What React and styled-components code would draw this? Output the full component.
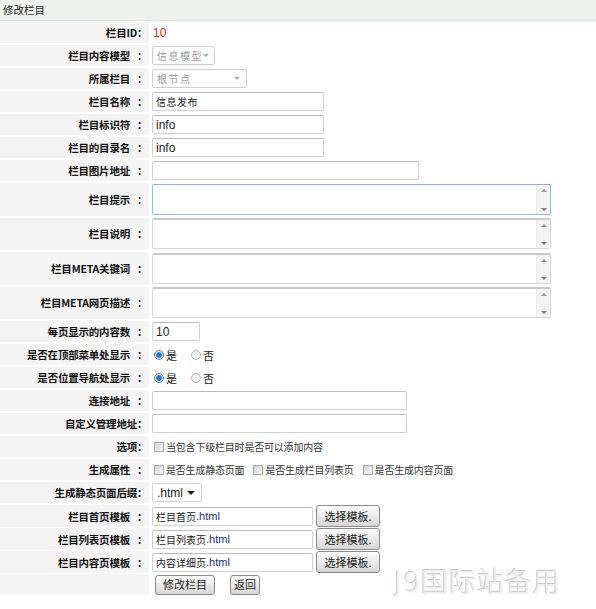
import React from 'react';
import styled, { createGlobalStyle } from 'styled-components';

const GlobalStyle = createGlobalStyle`
  html, body {
    margin: 0;
    padding: 0;
    background: #fff;
  }
  body {
    font-family: "Liberation Sans", "Noto Sans CJK SC", sans-serif;
    font-size: 11px;
    color: #333;
  }
`;

const Page = styled.div`
  position: relative;
  width: 596px;
  height: 609px;
  overflow: hidden;
`;

const Header = styled.div`
  height: 20px;
  line-height: 20px;
  padding-left: 3px;
  background: #eef2ef;
  border-bottom: 1px solid #dde3df;
  color: #222;
  font-family: "Noto Sans CJK SC", sans-serif;
  font-size: 10.5px;
`;

const Form = styled.div`
  display: flex;
  flex-direction: column;
  gap: 2px;
  padding-top: 1px;
`;

const Row = styled.div`
  display: grid;
  grid-template-columns: 149px 1fr;
  height: ${p => (p.$tall ? '32.5px' : '21px')};
`;

const Label = styled.div`
  background: #f4f4f4;
  display: flex;
  align-items: center;
  justify-content: flex-end;
  padding-right: 1px;
  font-family: "Noto Sans CJK SC", "Liberation Sans", sans-serif;
  font-weight: bold;
  font-size: 10.5px;
  color: #111;
  white-space: nowrap;
  letter-spacing: -0.2px;
`;

const Colon = styled.span`
  margin-left: ${p => (p.$sp ? 7 : 0)}px;
  width: 11px;
`;

const Field = styled.div`
  display: flex;
  align-items: center;
  gap: ${p => p.$gap ?? 3}px;
  padding-left: 3px;
`;

const IdValue = styled.span`
  color: #ee2222;
  font-size: 12px;
  padding-left: 1px;
`;

const TextInput = styled.input`
  box-sizing: border-box;
  width: ${p => p.$w}px;
  height: 19px;
  padding: 0 3px;
  border: 1px solid #cfcfcf;
  border-top-color: #bdbdbd;
  border-radius: 2px;
  font-family: ${p => (p.$cjk ? '"Noto Sans CJK SC", sans-serif' : '"Liberation Sans", sans-serif')};
  font-size: ${p => (p.$cjk ? 10 : 12)}px;
  letter-spacing: ${p => (p.$cjk ? 0.5 : 0)}px;
  color: #222;
  background: #fff;
  outline: none;
`;

const TemplateName = styled.div`
  box-sizing: border-box;
  width: 161px;
  height: 19px;
  display: flex;
  align-items: center;
  padding: 0 3px;
  border: 1px solid #cfcfcf;
  border-top-color: #bdbdbd;
  border-radius: 2px;
  font-family: "Noto Sans CJK SC", sans-serif;
  font-size: 10px;
  color: #222;
`;

const Html = styled.span`
  font-family: "Liberation Sans", sans-serif;
  font-size: 11px;
  color: #1a2d8c;
`;

const AreaBox = styled.div`
  box-sizing: border-box;
  width: 399px;
  height: 31px;
  display: flex;
  border: 1px solid ${p => (p.$focus ? '#8cbde6' : '#d6d6d6')};
  border-top: ${p => (p.$focus ? '1px solid #7fb1dc' : '2px solid #c9c9c9')};
  border-radius: 2px;
  background: #fff;
`;

const Area = styled.textarea`
  flex: 1;
  margin: 0;
  padding: 2px 3px;
  border: 0;
  resize: none;
  outline: none;
  background: transparent;
  font-family: "Liberation Sans", "Noto Sans CJK SC", sans-serif;
  font-size: 12px;
`;

const ScrollTrack = styled.div`
  width: 13px;
  display: flex;
  flex-direction: column;
  justify-content: space-between;
  align-items: center;
  padding: 4px 0 3px;
  background: #f3f3f3;
  border-left: 1px solid #ececec;
`;

const Arrow = styled.span`
  width: 0;
  height: 0;
  border-left: 3px solid transparent;
  border-right: 3px solid transparent;
  ${p =>
    p.$up
      ? 'border-bottom: 3px solid #9a9a9a;'
      : 'border-top: 3px solid #7d7d7d;'}
`;

const FakeSelect = styled.div`
  box-sizing: border-box;
  width: ${p => p.$w}px;
  height: 19px;
  display: flex;
  align-items: center;
  justify-content: space-between;
  padding: 0 6px 0 4px;
  border: 1px solid ${p => (p.$disabled ? '#cfcfcf' : '#d4d4d4')};
  border-radius: 2px;
  background: #fff;
  color: ${p => (p.$disabled ? '#999' : '#222')};
  font-family: ${p => (p.$disabled ? '"Noto Sans CJK SC", sans-serif' : '"Liberation Sans", sans-serif')};
  font-size: ${p => (p.$disabled ? 10 : 12)}px;
  letter-spacing: ${p => (p.$disabled ? 1.5 : 0)}px;
  white-space: nowrap;
`;

const Caret = styled.span`
  width: 0;
  height: 0;
  border-left: ${p => (p.$dark ? 4 : 3)}px solid transparent;
  border-right: ${p => (p.$dark ? 4 : 3)}px solid transparent;
  border-top: ${p => (p.$dark ? 4 : 3)}px solid ${p => (p.$dark ? '#222' : '#aaa')};
`;

const RadioGroup = styled.label`
  display: inline-flex;
  align-items: center;
  gap: 2px;
  margin-right: 9px;
  font-family: "Noto Sans CJK SC", sans-serif;
  font-size: 11px;
  color: #222;
`;

const Radio = styled.span`
  box-sizing: border-box;
  width: 10px;
  height: 10px;
  border-radius: 50%;
  border: 1px solid ${p => (p.$on ? '#6b7f96' : '#bcbcbc')};
  background: ${p =>
    p.$on
      ? 'radial-gradient(circle, #1f74c9 0 2.3px, #7fb0de 2.8px, #e8eef4 3.6px)'
      : 'linear-gradient(#e6e6e6, #fafafa)'};
  margin-left: 2px;
`;

const CheckGroup = styled.label`
  display: inline-flex;
  align-items: center;
  gap: 2px;
  margin-right: 7px;
  font-family: "Noto Sans CJK SC", sans-serif;
  font-size: 10px;
  letter-spacing: -0.2px;
  color: #333;
  white-space: nowrap;
`;

const Box = styled.span`
  box-sizing: border-box;
  width: 10px;
  height: 10px;
  border: 1px solid #a9a9a9;
  background: linear-gradient(135deg, #d4d4d4, #f6f6f6);
  margin-left: 2px;
`;

const Button = styled.button`
  box-sizing: border-box;
  width: ${p => p.$w}px;
  height: ${p => p.$h || 21}px;
  padding: 0;
  border: 1px solid #8b8b8b;
  border-radius: 3px;
  background: linear-gradient(#fdfdfd, #e8e8e8 55%, #d6d6d6);
  font-family: "Noto Sans CJK SC", "Liberation Sans", sans-serif;
  font-size: 11px;
  color: #222;
  line-height: 1;
  cursor: pointer;
`;

const Actions = styled.div`
  display: flex;
  align-items: center;
  gap: 15px;
  padding-left: 3px;
`;

const Watermark = styled.div`
  position: absolute;
  right: 35px;
  bottom: 9px;
  font-family: "DejaVu Sans", "Noto Sans CJK SC", sans-serif;
  font-weight: 200;
  font-size: 27px;
  letter-spacing: 1px;
  color: #eeeeee;
  text-shadow: -1px -1px 0 #c8c8c8, 1px 1px 0 #f6f6f6;
`;

const textRows = [
  { label: '栏目名称', value: '信息发布', w: 172, cjk: true },
  { label: '栏目标识符', value: 'info', w: 172 },
  { label: '栏目的目录名', value: 'info', w: 172 },
  { label: '栏目图片地址', value: '', w: 267 },
];

const areaRows = ['栏目提示', '栏目说明', '栏目META关键词', '栏目META网页描述'];

const templates = [
  { label: '栏目首页模板', name: '栏目首页' },
  { label: '栏目列表页模板', name: '栏目列表页' },
  { label: '栏目内容页模板', name: '内容详细页' },
];

const RowLabel = ({ text, sp = true }) => (
  <Label>
    {text}
    {text && <Colon $sp={sp}>：</Colon>}
  </Label>
);

const YesNo = () => (
  <>
    <RadioGroup><Radio $on />是</RadioGroup>
    <RadioGroup><Radio />否</RadioGroup>
  </>
);

export default function App() {
  return (
    <Page>
      <GlobalStyle />
      <Header>修改栏目</Header>
      <Form>
        <Row>
          <RowLabel text="栏目ID" sp={false} />
          <Field><IdValue>10</IdValue></Field>
        </Row>
        <Row>
          <RowLabel text="栏目内容模型" />
          <Field>
            <FakeSelect $w={63} $disabled>信息模型<Caret /></FakeSelect>
          </Field>
        </Row>
        <Row>
          <RowLabel text="所属栏目" />
          <Field>
            <FakeSelect $w={95} $disabled>根节点<Caret /></FakeSelect>
          </Field>
        </Row>
        {textRows.map(r => (
          <Row key={r.label}>
            <RowLabel text={r.label} />
            <Field>
              <TextInput $w={r.w} $cjk={r.cjk} defaultValue={r.value} />
            </Field>
          </Row>
        ))}
        {areaRows.map((l, i) => (
          <Row key={l} $tall>
            <RowLabel text={l} />
            <Field>
              <AreaBox $focus={i === 0}>
                <Area />
                <ScrollTrack>
                  <Arrow $up />
                  <Arrow />
                </ScrollTrack>
              </AreaBox>
            </Field>
          </Row>
        ))}
        <Row>
          <RowLabel text="每页显示的内容数" />
          <Field>
            <TextInput $w={48} defaultValue="10" />
          </Field>
        </Row>
        <Row>
          <RowLabel text="是否在顶部菜单处显示" />
          <Field><YesNo /></Field>
        </Row>
        <Row>
          <RowLabel text="是否位置导航处显示" />
          <Field><YesNo /></Field>
        </Row>
        <Row>
          <RowLabel text="连接地址" />
          <Field><TextInput $w={255} /></Field>
        </Row>
        <Row>
          <RowLabel text="自定义管理地址" sp={false} />
          <Field><TextInput $w={255} /></Field>
        </Row>
        <Row>
          <RowLabel text="选项" sp={false} />
          <Field>
            <CheckGroup><Box />当包含下级栏目时是否可以添加内容</CheckGroup>
          </Field>
        </Row>
        <Row>
          <RowLabel text="生成属性" />
          <Field $gap={0}>
            <CheckGroup><Box />是否生成静态页面</CheckGroup>
            <CheckGroup><Box />是否生成栏目列表页</CheckGroup>
            <CheckGroup><Box />是否生成内容页面</CheckGroup>
          </Field>
        </Row>
        <Row>
          <RowLabel text="生成静态页面后缀" sp={false} />
          <Field>
            <FakeSelect $w={50}>.html<Caret $dark /></FakeSelect>
          </Field>
        </Row>
        {templates.map(t => (
          <Row key={t.label}>
            <RowLabel text={t.label} />
            <Field>
              <TemplateName>
                {t.name}<Html>.html</Html>
              </TemplateName>
              <Button $w={64} $h={22}>选择模板.</Button>
            </Field>
          </Row>
        ))}
        <Row>
          <RowLabel text="" />
          <Field>
            <Actions>
              <Button $w={60} $h={20}>修改栏目</Button>
              <Button $w={30} $h={20}>返回</Button>
            </Actions>
          </Field>
        </Row>
      </Form>
      <Watermark>J9国际站备用</Watermark>
    </Page>
  );
}
